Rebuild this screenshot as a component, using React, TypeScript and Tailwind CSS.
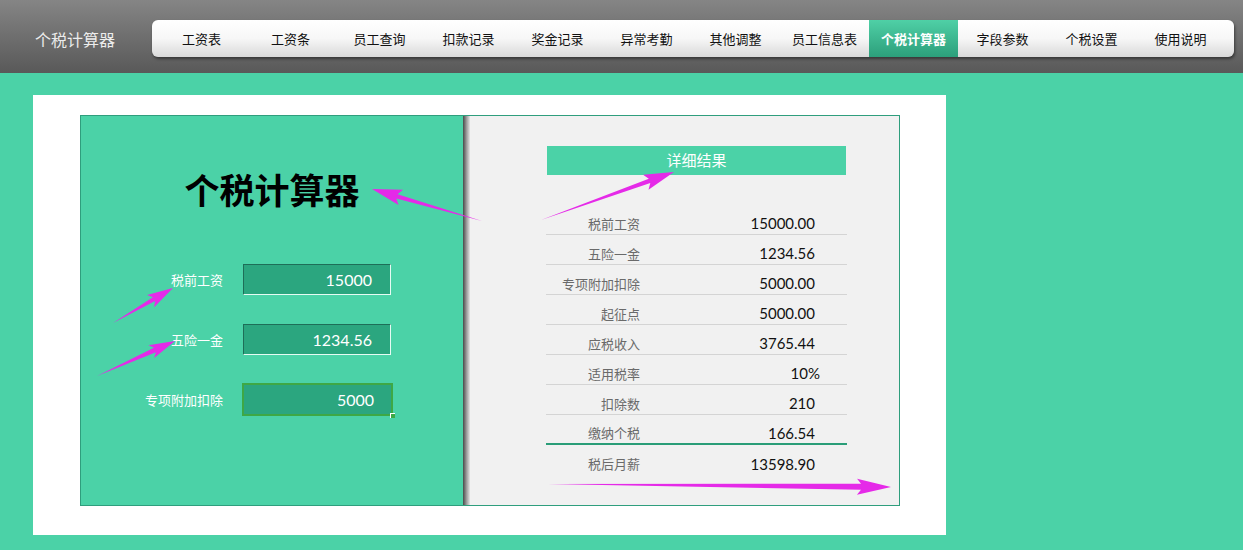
import React from "react";

const navItems = [
  "工资表",
  "工资条",
  "员工查询",
  "扣款记录",
  "奖金记录",
  "异常考勤",
  "其他调整",
  "员工信息表",
  "个税计算器",
  "字段参数",
  "个税设置",
  "使用说明",
];

const inputs = [
  { label: "税前工资", value: "15000", selected: false },
  { label: "五险一金", value: "1234.56", selected: false },
  { label: "专项附加扣除", value: "5000", selected: true },
];

const results = [
  { label: "税前工资", value: "15000.00" },
  { label: "五险一金", value: "1234.56" },
  { label: "专项附加扣除", value: "5000.00" },
  { label: "起征点", value: "5000.00" },
  { label: "应税收入", value: "3765.44" },
  { label: "适用税率", value: "10%", shift: true },
  { label: "扣除数", value: "210" },
  { label: "缴纳个税", value: "166.54", total: true },
  { label: "税后月薪", value: "13598.90", last: true },
];

type Arrow = { sx: number; sy: number; ex: number; ey: number; head: number; hw: number; sw: number };

const arrows: Arrow[] = [
  { sx: 482, sy: 221, ex: 372, ey: 189, head: 26, hw: 8, sw: 2.2 },
  { sx: 541, sy: 220, ex: 674, ey: 172, head: 26, hw: 8, sw: 2.2 },
  { sx: 113, sy: 323, ex: 173, ey: 288, head: 22, hw: 7, sw: 2.2 },
  { sx: 97, sy: 376, ex: 175, ey: 341, head: 22, hw: 7, sw: 2.4 },
  { sx: 548, sy: 484, ex: 891, ey: 487, head: 30, hw: 8, sw: 3 },
];

function arrowPoints(a: Arrow) {
  const dx = a.ex - a.sx;
  const dy = a.ey - a.sy;
  const len = Math.hypot(dx, dy);
  const ux = dx / len;
  const uy = dy / len;
  const nx = -uy;
  const ny = ux;
  const bx = a.ex - ux * a.head;
  const by = a.ey - uy * a.head;
  const bbx = a.ex - ux * (a.head + 4);
  const bby = a.ey - uy * (a.head + 4);
  const pts = [
    [a.sx, a.sy],
    [bx + nx * a.sw, by + ny * a.sw],
    [bbx + nx * a.hw, bby + ny * a.hw],
    [a.ex, a.ey],
    [bbx - nx * a.hw, bby - ny * a.hw],
    [bx - nx * a.sw, by - ny * a.sw],
  ];
  return pts.map((p) => p.join(",")).join(" ");
}

export default function App() {
  return (
    <div className="relative w-[1243px] h-[550px] overflow-hidden bg-[#4bd2a7] font-['Noto_Sans_CJK_SC',sans-serif]">
      {/* header */}
      <div className="h-[73px] flex items-start pt-[20px] bg-gradient-to-b from-[#858585] to-[#595959]">
        <div className="w-[152px] h-[37px] flex items-center pl-[35px] text-[16px] leading-none text-[#ececec]">个税计算器</div>
        <nav className="w-[1082px] h-[37px] flex items-stretch pl-[5px] rounded-[6px] bg-gradient-to-b from-white via-[#f7f7f7] to-[#d9d9d9] shadow-[1px_2px_3px_rgba(0,0,0,0.45)]">
          {navItems.map((item) => {
            const active = item === "个税计算器";
            return (
              <div
                key={item}
                className={
                  active
                    ? "w-[89px] flex items-center justify-center text-[13px] font-bold text-white bg-gradient-to-b from-[#4fd0a6] to-[#2c9f7b]"
                    : "w-[89px] flex items-center justify-center text-[13px] text-[#111]"
                }
              >
                {item}
              </div>
            );
          })}
        </nav>
      </div>

      {/* sheet */}
      <div className="pl-[33px] pt-[22px]">
        <div className="w-[913px] h-[440px] bg-white pl-[47px] pt-[20px]">
          <div className="w-[820px] h-[391px] flex border border-[#2f9e7d]">
            {/* left input side */}
            <div className="w-[382px] bg-[#4bd2a7] flex flex-col">
              <div className="mt-[52px] text-center text-[35px] leading-[42px] font-bold text-black">个税计算器</div>
              <div className="mt-[54px] flex flex-col gap-[29px]">
                {inputs.map((r) => (
                  <div key={r.label} className="flex items-center h-[31px]">
                    <div className="w-[142px] text-right text-[13px] text-white">{r.label}</div>
                    {r.selected ? (
                      <div className="relative ml-[19px] w-[151px] h-[33px] border-2 border-[#3ea845] bg-[#2ba67f] flex items-center justify-end pr-[17px]">
                        <span className="font-['Lato',sans-serif] text-[16px] text-white">{r.value}</span>
                        <div className="absolute right-[-4px] bottom-[-4px] w-[5px] h-[5px] bg-[#3ea845] border-l border-t border-white" />
                      </div>
                    ) : (
                      <div className="ml-[20px] w-[148px] h-[31px] border-t border-l border-[#1e6e58] border-r-[#e6fbf3] border-b-[#e6fbf3] border-r border-b bg-[#2ba67f] flex items-center justify-end pr-[18px]">
                        <span className="font-['Lato',sans-serif] text-[16px] text-white">{r.value}</span>
                      </div>
                    )}
                  </div>
                ))}
              </div>
            </div>

            {/* divider shadow */}
            <div className="w-[7px] bg-gradient-to-r from-[#4a4a4a] via-[#9a9a9a] to-[#e6e6e6]" />

            {/* right result side */}
            <div className="flex-1 bg-[#f1f1f1] pl-[77px] pt-[30px]">
              <div className="w-[299px] h-[29px] bg-[#4bd2a7] flex items-center justify-center text-[15px] text-white">详细结果</div>
              <div className="mt-[30px] w-[301px] ml-[-1px]">
                {results.map((r) => (
                  <div
                    key={r.label}
                    className={
                      r.total
                        ? "h-[30px] flex items-center pt-[8px] border-b-2 border-[#2a9d78]"
                        : r.last
                        ? "h-[30px] flex items-center pt-[8px]"
                        : "h-[30px] flex items-center pt-[8px] border-b border-[#d4d4d4]"
                    }
                  >
                    <div className="w-[94px] text-right text-[13px] text-[#6a6a6a]">{r.label}</div>
                    <div
                      className={
                        r.shift
                          ? "flex-1 text-right pr-[27px] font-['Lato',sans-serif] text-[15px] text-[#111]"
                          : "flex-1 text-right pr-[32px] font-['Lato',sans-serif] text-[15px] text-[#111]"
                      }
                    >
                      {r.value}
                    </div>
                  </div>
                ))}
              </div>
            </div>
          </div>
        </div>
      </div>

      {/* annotation arrows */}
      <svg className="absolute left-0 top-0 pointer-events-none" width="1243" height="550">
        {arrows.map((a, i) => (
          <polygon key={i} points={arrowPoints(a)} fill="#e52ae8" />
        ))}
      </svg>
    </div>
  );
}
